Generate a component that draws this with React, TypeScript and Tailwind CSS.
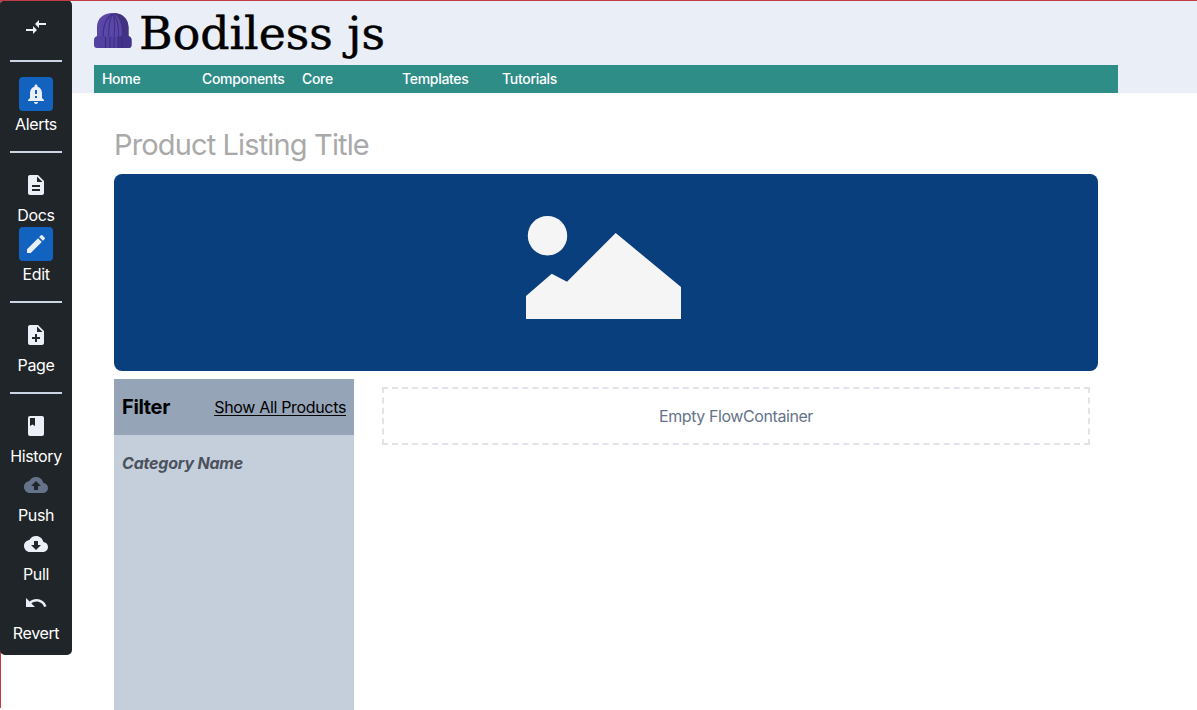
import type { ReactNode } from "react";
import { MdBook, MdCompareArrows, MdDescription, MdEdit, MdNoteAdd, MdUndo } from "react-icons/md";

type ItemProps = { icon: ReactNode; label: string; active?: boolean; disabled?: boolean };

function Glyph({ d }: { d: string }) {
  return (
    <svg width="24" height="24" viewBox="0 0 24 24" fill="currentColor">
      <path d={d} />
    </svg>
  );
}

const BELL =
  "M12 22c1.100 0 2-.9 2-2h-4c0 1.100.9 2 2 2zM18 16v-5c0-3.070-1.640-5.640-4.500-6.320V4c0-.83-.67-1.500-1.500-1.500s-1.500.67-1.500 1.500v.68C7.630 5.360 6 7.920 6 11v5l-2 2v1h16v-1l-2-2zm-5 0h-2v-2h2v2zm0-4h-2V8h2v4z";
const CLOUD =
  "M19.350 10.040C18.670 6.590 15.640 4 12 4 9.110 4 6.600 5.640 5.350 8.040 2.340 8.360 0 10.910 0 14c0 3.310 2.690 6 6 6h13c2.760 0 5-2.240 5-5 0-2.640-2.050-4.780-4.650-4.960z";
const CLOUD_UP = CLOUD + "M14 13v4h-4v-4H7l5-5 5 5h-3z";
const CLOUD_DOWN = CLOUD + "M17 13l-5 5-5-5h3V9h4v4h3z";

function Item({ icon, label, active, disabled }: ItemProps) {
  return (
    <button className="flex h-[59px] w-full flex-col items-center">
      <span
        className={`flex h-[34px] w-[34px] shrink-0 items-center justify-center rounded ${
          active ? "bg-[#1263bf]" : ""
        } ${disabled ? "text-[#65738a]" : "text-[#ebf0f8]"}`}
      >
        {icon}
      </span>
      <span className="whitespace-nowrap text-base font-[430] leading-[26px] tracking-[-0.35px] text-white">{label}</span>
    </button>
  );
}

function Divider() {
  return <hr className="my-[15px] h-[2px] w-[52px] border-0 bg-[#cbd5e4]" />;
}

function Sidebar() {
  return (
    <aside className="flex h-[655px] w-[72px] shrink-0 flex-col items-center rounded-[5px] bg-[#202529] pt-[10px]">
      <button className="flex h-[35px] items-start justify-center pt-[5px] text-[#ebf0f8]">
        <MdCompareArrows size={24} />
      </button>
      <Divider />
      <Item icon={<Glyph d={BELL} />} label="Alerts" active />
      <Divider />
      <Item icon={<MdDescription size={24} />} label="Docs" />
      <Item icon={<MdEdit size={24} />} label="Edit" active />
      <Divider />
      <Item icon={<MdNoteAdd size={24} />} label="Page" />
      <Divider />
      <Item icon={<MdBook size={24} />} label="History" />
      <Item icon={<Glyph d={CLOUD_UP} />} label="Push" disabled />
      <Item icon={<Glyph d={CLOUD_DOWN} />} label="Pull" />
      <Item icon={<MdUndo size={24} />} label="Revert" />
    </aside>
  );
}

function Logo() {
  return (
    <svg width="296" height="60" viewBox="94 4 296 60" className="block">
      <path d="M97 37V27C97 18 104 13 112.500 13S128 18 128.500 27V37Z" fill="#5a47a8" />
      <path d="M113 13C123 13 128.500 19 128.500 28V37H122C122 26 121 18 113 13Z" fill="#41327f" />
      <path d="M103 37C103 26 106 18 112 14M108.500 37C108.500 26 110 18 112.500 14M114 37C115 27 115 19 113 14M118.500 37C119 27 118 19 113 14" fill="none" stroke="#403087" strokeWidth="1.100" />
      <path d="M97 36H128.500Q131.500 37 131.500 40V45Q131.500 48 128.500 48H97Q94 48 94 45V40Q94 37 97 36Z" fill="#5341a2" />
      <path d="M118 36H128.500Q131.500 37 131.500 40V45Q131.500 48 128.500 48H118Z" fill="#43338a" />
      <path d="M105.500 37V48M110 37V48M114 37V48M118 37V48M122 37V48" stroke="#3a2b7c" strokeWidth="1" />
      <text
        x="139"
        y="48.500"
        textLength="246"
        lengthAdjust="spacingAndGlyphs"
        className="fill-black stroke-black stroke-[0.5px] font-['DejaVu_Serif',serif] text-[45px]"
      >
        Bodiless js
      </text>
    </svg>
  );
}

const LINKS = ["Home", "Components", "Core", "Templates", "Tutorials"];

function Header() {
  return (
    <header className="h-[92px] bg-[#eaeff7] pl-[22px] pt-[3px]">
      <div className="h-[61px]">
        <Logo />
      </div>
      <nav className="flex h-7 w-[1024px] items-center bg-[#2f8d88] text-sm font-medium tracking-[-0.3px] text-white">
        {LINKS.map((l) => (
          <a key={l} className="w-[100px] whitespace-nowrap pl-2">
            {l}
          </a>
        ))}
      </nav>
    </header>
  );
}

function Placeholder() {
  return (
    <div className="flex h-[197px] justify-center rounded-lg bg-[#0a3f7e] pt-10">
      <svg width="160" height="108" viewBox="524 214 160 108" className="mr-[4px]" fill="#f5f5f5">
        <circle cx="547.500" cy="235.700" r="19.700" />
        <path d="M526 296L551.700 273.700L567 281.700L615.700 233L681 287V319H526Z" />
      </svg>
    </div>
  );
}

export default function App() {
  return (
    <div className="flex h-[710px] w-[1197px] overflow-hidden border-t border-[#c23b45] bg-white font-['Inter','Liberation_Sans',sans-serif]">
      <div className="-mt-px h-[708px] w-[72px] shrink-0 bg-[linear-gradient(to_right,#c23b45_1px,transparent_1px)]">
        <Sidebar />
      </div>
      <div className="flex min-w-0 flex-1 flex-col">
        <Header />
        <main className="ml-[42px] flex w-[984px] flex-1 flex-col">
          <h1 className="mb-[11px] mt-[33px] h-[37px] text-[29px] leading-[37px] tracking-[-0.86px] text-[#a9a9a9]">
            Product Listing Title
          </h1>
          <Placeholder />
          <div className="mt-2 flex flex-1">
            <section className="w-60 bg-[#c5cfdc]">
              <div className="flex h-14 items-center justify-between bg-[#96a4b7] px-2 text-black">
                <h2 className="text-xl font-bold tracking-[-0.35px]">Filter</h2>
                <a className="whitespace-nowrap tracking-[-0.33px] underline underline-offset-2">Show All Products</a>
              </div>
              <p className="px-2 pt-4 font-bold italic tracking-[-0.2px] text-[#4b525c]">Category Name</p>
            </section>
            <section className="ml-7 flex-1 p-2 pl-0">
              <div className="flex h-[58px] items-center justify-center border-2 border-dashed border-[#e0e4e9] tracking-[-0.42px] text-[#65738a]">
                Empty FlowContainer
              </div>
            </section>
          </div>
        </main>
      </div>
    </div>
  );
}
